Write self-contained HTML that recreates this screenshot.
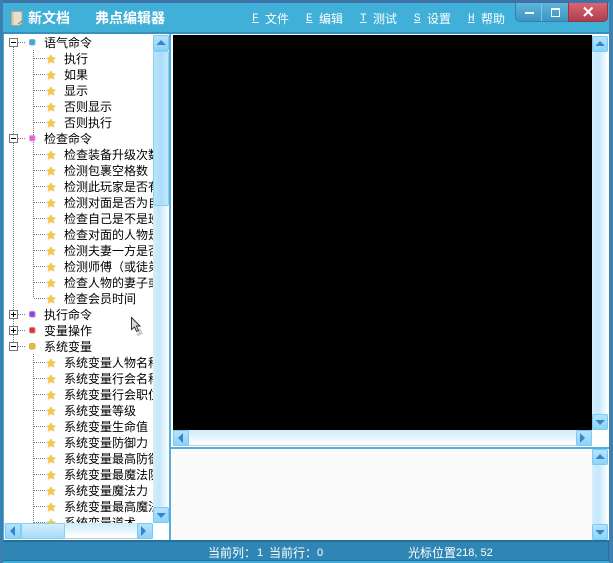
<!DOCTYPE html>
<html><head><meta charset="utf-8"><style>
html,body{margin:0;padding:0}
body{width:613px;height:563px;overflow:hidden;position:relative;background:#3faed8;font:12px/16px "WenQuanYi Zen Hei","Noto Sans CJK SC",sans-serif;color:#000}
div,span{position:absolute;white-space:nowrap}
.t{color:#fff;top:11px;line-height:16px}
.u{color:#fff;top:11px;line-height:16px;text-decoration:underline;font-family:"Liberation Mono",monospace;font-size:11px}
.b{font-weight:bold;font-size:14px}
.r{left:0;height:16px}
.btn{width:14px;height:14px;border:1px solid #74cdf4;border-radius:2px;background:linear-gradient(#b5e3fb,#8fd3f7)}
.v{background:linear-gradient(90deg,#d5eefd,#c5e7fb 40%,#fff)}
.h{background:linear-gradient(#cdebfc,#fff 90%,#bbb)}
.th{background:linear-gradient(90deg,#bde4fb,#a9dcfa 50%,#c5e9fc);border:1px solid #87d0f5;border-radius:2px;box-sizing:border-box}
.thh{background:linear-gradient(#d3eefd,#a7dbf8);border:1px solid #87d0f5;border-radius:2px;box-sizing:border-box}
</style></head><body>
<div style="left:0;top:0;width:613px;height:3px;background:#3f73a8"></div>
<div style="left:0;top:0;width:3px;height:563px;background:#3f7fb0"></div>
<div style="left:609px;top:0;width:4px;height:563px;background:#3f80b2"></div>
<div style="left:3px;top:3px;width:606px;height:30px;background:#40b0d9;border-radius:4px 4px 0 0"></div>
<div style="left:3px;top:32px;width:606px;height:2px;background:#3590bd"></div>

<svg style="position:absolute;left:10px;top:10px" width="15" height="18"><path d="M1.500 1.500H12V13L9.500 15.500H1.500Z" fill="#e9dfcf" stroke="#b0a692"/><path d="M2 2H4V15H2Z" fill="#d6cbb5"/><path d="M8 14L12 11" stroke="#777"/></svg>
<div class="t b" style="left:28px;top:10px">新文档</div>
<div class="t b" style="left:95px;top:10px">弗点编辑器</div>
<div class="u" style="left:252px">F</div><div class="t" style="left:265px">文件</div>
<div class="u" style="left:306px">E</div><div class="t" style="left:319px">编辑</div>
<div class="u" style="left:360px">T</div><div class="t" style="left:373px">测试</div>
<div class="u" style="left:414px">S</div><div class="t" style="left:427px">设置</div>
<div class="u" style="left:468px">H</div><div class="t" style="left:481px">帮助</div>

<div style="left:515px;top:3px;width:56px;height:19px;background:linear-gradient(#5fb5d9,#3b96c4);border:1px solid #3a7fae;border-top:0;border-radius:0 0 0 5px;box-sizing:border-box"></div>
<div style="left:541px;top:3px;width:1px;height:18px;background:#7cc4e2"></div>
<div style="left:568px;top:3px;width:40px;height:19px;background:linear-gradient(#dc6470,#ad3f50);border:1px solid #8c3a48;border-top:0;border-radius:0 0 5px 0;box-sizing:border-box"></div>
<div style="left:525px;top:12px;width:9px;height:2px;background:#fff"></div>
<div style="left:551px;top:8px;width:7px;height:6px;border:1px solid #fff;border-top-width:2px"></div>
<svg style="position:absolute;left:582px;top:6px" width="14" height="12"><path d="M2 1.500L10.500 10M10.500 1.500L2 10" stroke="#fff" stroke-width="2.200"/></svg>

<div style="left:4px;top:34px;width:166px;height:506px;background:#fff;overflow:hidden">
<svg style="position:absolute;left:-4px;top:-34px" width="170" height="540">
<defs><symbol id="s" viewBox="0 0 10 10"><path d="M5 .5L6.500 3.300L9.700 3.800L7.400 6.100L8 9.500L5 8L2 9.500L2.600 6.100L.3 3.800L3.500 3.300Z" fill="#f8c843" stroke="#f0c860" stroke-width="1" stroke-linejoin="round"/></symbol></defs>
<g stroke="#777" stroke-dasharray="1 1" fill="none">
<path d="M13.500 47V342M33.500 50V298M33.500 354V530"/>
<path d="M18 42.500H26M18 138.500H26M18 314.500H26M18 330.500H26M18 346.500H26"/>
<path d="M34 58.500H45M34 74.500H45M34 90.500H45M34 106.500H45M34 122.500H45M34 154.500H45M34 170.500H45M34 186.500H45M34 202.500H45M34 218.500H45M34 234.500H45M34 250.500H45M34 266.500H45M34 282.500H45M34 298.500H45M34 362.500H45M34 378.500H45M34 394.500H45M34 410.500H45M34 426.500H45M34 442.500H45M34 458.500H45M34 474.500H45M34 490.500H45M34 506.500H45M34 522.500H45"/>
</g>
<g fill="#fff" stroke="#777"><rect x="9.500" y="38.500" width="8" height="8"/><rect x="9.500" y="134.500" width="8" height="8"/><rect x="9.500" y="310.500" width="8" height="8"/><rect x="9.500" y="326.500" width="8" height="8"/><rect x="9.500" y="342.500" width="8" height="8"/></g>
<path d="M11 42.500H16M11 138.500H16M11 314.500H16M13.500 312V317M11 330.500H16M13.500 328V333M11 346.500H16" stroke="#000"/>
<rect x="29.500" y="39.500" width="5.500" height="5.500" rx="1.500" fill="#3aa6e8" stroke="#7fb0d0"/>
<rect x="29.500" y="135.500" width="5.500" height="5.500" rx="1.500" fill="#f05ce0" stroke="#d8a0d8"/>
<rect x="29.500" y="311.500" width="5.500" height="5.500" rx="1.500" fill="#9a40e0" stroke="#a088c8"/>
<rect x="29.500" y="327.500" width="5.500" height="5.500" rx="1.500" fill="#e82c30" stroke="#c88888"/>
<rect x="29.500" y="343.500" width="5.500" height="5.500" rx="1.500" fill="#f4b820" stroke="#c8b070"/>
<g transform="translate(0 1)">
<use href="#s" x="46.500" y="53.500" width="9" height="9"/><use href="#s" x="46.500" y="69.500" width="9" height="9"/><use href="#s" x="46.500" y="85.500" width="9" height="9"/><use href="#s" x="46.500" y="101.500" width="9" height="9"/><use href="#s" x="46.500" y="117.500" width="9" height="9"/>
<use href="#s" x="46.500" y="149.500" width="9" height="9"/><use href="#s" x="46.500" y="165.500" width="9" height="9"/><use href="#s" x="46.500" y="181.500" width="9" height="9"/><use href="#s" x="46.500" y="197.500" width="9" height="9"/><use href="#s" x="46.500" y="213.500" width="9" height="9"/><use href="#s" x="46.500" y="229.500" width="9" height="9"/><use href="#s" x="46.500" y="245.500" width="9" height="9"/><use href="#s" x="46.500" y="261.500" width="9" height="9"/><use href="#s" x="46.500" y="277.500" width="9" height="9"/><use href="#s" x="46.500" y="293.500" width="9" height="9"/>
<use href="#s" x="46.500" y="357.500" width="9" height="9"/><use href="#s" x="46.500" y="373.500" width="9" height="9"/><use href="#s" x="46.500" y="389.500" width="9" height="9"/><use href="#s" x="46.500" y="405.500" width="9" height="9"/><use href="#s" x="46.500" y="421.500" width="9" height="9"/><use href="#s" x="46.500" y="437.500" width="9" height="9"/><use href="#s" x="46.500" y="453.500" width="9" height="9"/><use href="#s" x="46.500" y="469.500" width="9" height="9"/><use href="#s" x="46.500" y="485.500" width="9" height="9"/><use href="#s" x="46.500" y="501.500" width="9" height="9"/><use href="#s" x="46.500" y="517.500" width="9" height="9"/>
</g>
</svg>
<div style="left:0;top:0;width:149px;height:506px;overflow:hidden">
<div class="r" style="left:40px;top:1px">语气命令</div>
<div class="r" style="left:60px;top:17px">执行</div>
<div class="r" style="left:60px;top:33px">如果</div>
<div class="r" style="left:60px;top:49px">显示</div>
<div class="r" style="left:60px;top:65px">否则显示</div>
<div class="r" style="left:60px;top:81px">否则执行</div>
<div class="r" style="left:40px;top:97px">检查命令</div>
<div class="r" style="left:60px;top:113px">检查装备升级次数</div>
<div class="r" style="left:60px;top:129px">检测包裹空格数</div>
<div class="r" style="left:60px;top:145px">检测此玩家是否有</div>
<div class="r" style="left:60px;top:161px">检测对面是否为自</div>
<div class="r" style="left:60px;top:177px">检查自己是不是班</div>
<div class="r" style="left:60px;top:193px">检查对面的人物是</div>
<div class="r" style="left:60px;top:209px">检测夫妻一方是否</div>
<div class="r" style="left:60px;top:225px">检测师傅（或徒弟</div>
<div class="r" style="left:60px;top:241px">检查人物的妻子或</div>
<div class="r" style="left:60px;top:257px">检查会员时间</div>
<div class="r" style="left:40px;top:273px">执行命令</div>
<div class="r" style="left:40px;top:289px">变量操作</div>
<div class="r" style="left:40px;top:305px">系统变量</div>
<div class="r" style="left:60px;top:321px">系统变量人物名称</div>
<div class="r" style="left:60px;top:337px">系统变量行会名称</div>
<div class="r" style="left:60px;top:353px">系统变量行会职位</div>
<div class="r" style="left:60px;top:369px">系统变量等级</div>
<div class="r" style="left:60px;top:385px">系统变量生命值</div>
<div class="r" style="left:60px;top:401px">系统变量防御力</div>
<div class="r" style="left:60px;top:417px">系统变量最高防御</div>
<div class="r" style="left:60px;top:433px">系统变量最魔法防</div>
<div class="r" style="left:60px;top:449px">系统变量魔法力</div>
<div class="r" style="left:60px;top:465px">系统变量最高魔法</div>
<div class="r" style="left:60px;top:481px">系统变量道术</div>
</div>
</div>

<!-- tree scrollbars -->
<div class="v" style="left:153px;top:35px;width:16px;height:488px"></div>
<div class="btn" style="left:153px;top:35px"></div>
<div class="th" style="left:153px;top:51px;width:16px;height:155px"></div>
<div class="btn" style="left:153px;top:507px"></div>
<div class="h" style="left:4px;top:523px;width:149px;height:16px"></div>
<div class="btn" style="left:5px;top:523px"></div>
<div class="thh" style="left:21px;top:523px;width:44px;height:16px"></div>
<div class="btn" style="left:137px;top:523px"></div>
<div style="left:153px;top:523px;width:16px;height:16px;background:#fff"></div>

<!-- main -->
<div style="left:169px;top:34px;width:440px;height:507px;background:#fff"></div>
<div style="left:169px;top:34px;width:2px;height:507px;background:#57acdc"></div>
<div style="left:173px;top:35px;width:419px;height:395px;background:#000"></div>
<div class="v" style="left:592px;top:36px;width:16px;height:394px"></div>
<div class="btn" style="left:592px;top:36px"></div>
<div class="btn" style="left:592px;top:414px"></div>
<div class="h" style="left:173px;top:430px;width:419px;height:16px"></div>
<div class="btn" style="left:173px;top:430px"></div>
<div class="btn" style="left:576px;top:430px"></div>
<div style="left:169px;top:447px;width:440px;height:2px;background:#57acdc"></div>
<div style="left:172px;top:449px;width:420px;height:91px;background:#fafafa"></div>
<div class="v" style="left:592px;top:449px;width:16px;height:91px"></div>
<div class="btn" style="left:592px;top:449px"></div>
<div class="btn" style="left:592px;top:524px"></div>

<!-- arrows -->
<svg style="position:absolute;left:0;top:0" width="613" height="563"><g fill="#3a84c6">
<path d="M156.500 45H166L161 40ZM595.500 46H605L600 41ZM595.500 459H605L600 454Z"/>
<path d="M156.500 513H166L161 518ZM595.500 420H605L600 425ZM595.500 530H605L600 535Z"/>
<path d="M15 526V536L10 531ZM183 433V443L178 438Z"/>
<path d="M141 526V536L146 531ZM580 433V443L585 438Z"/>
</g>
<path d="M139 329L141 333L137 335" stroke="#ccc" stroke-width="3" fill="none"/>
<path d="M131.500 317.500V329.500L134.500 327L136.500 331.500L138.500 330.500L136.500 326H140Z" fill="#d8d8d8" stroke="#222" stroke-width=".9"/>
<g stroke="#b9d8e8"><path d="M597 557L607 547M601 557L607 551M605 557L607 555"/></g>
</svg>

<!-- status -->
<div style="left:3px;top:540px;width:606px;height:21px;background:#2f86b4;border-top:2px solid #256f9e;border-bottom:1px solid #26709e;box-sizing:border-box"></div>
<div style="left:608px;top:541px;width:1px;height:20px;background:#256f9e"></div>
<div class="t" style="left:208px;top:545px">当前列：</div>
<div class="t" style="left:257px;top:545px;font-size:11px;font-family:'Liberation Sans',sans-serif">1</div>
<div class="t" style="left:269px;top:545px">当前行：</div>
<div class="t" style="left:317px;top:545px;font-size:11px;font-family:'Liberation Sans',sans-serif">0</div>
<div class="t" style="left:408px;top:545px">光标位置</div>
<div class="t" style="left:456px;top:545px;font-size:11px;font-family:'Liberation Sans',sans-serif">218, 52</div>
</body></html>
